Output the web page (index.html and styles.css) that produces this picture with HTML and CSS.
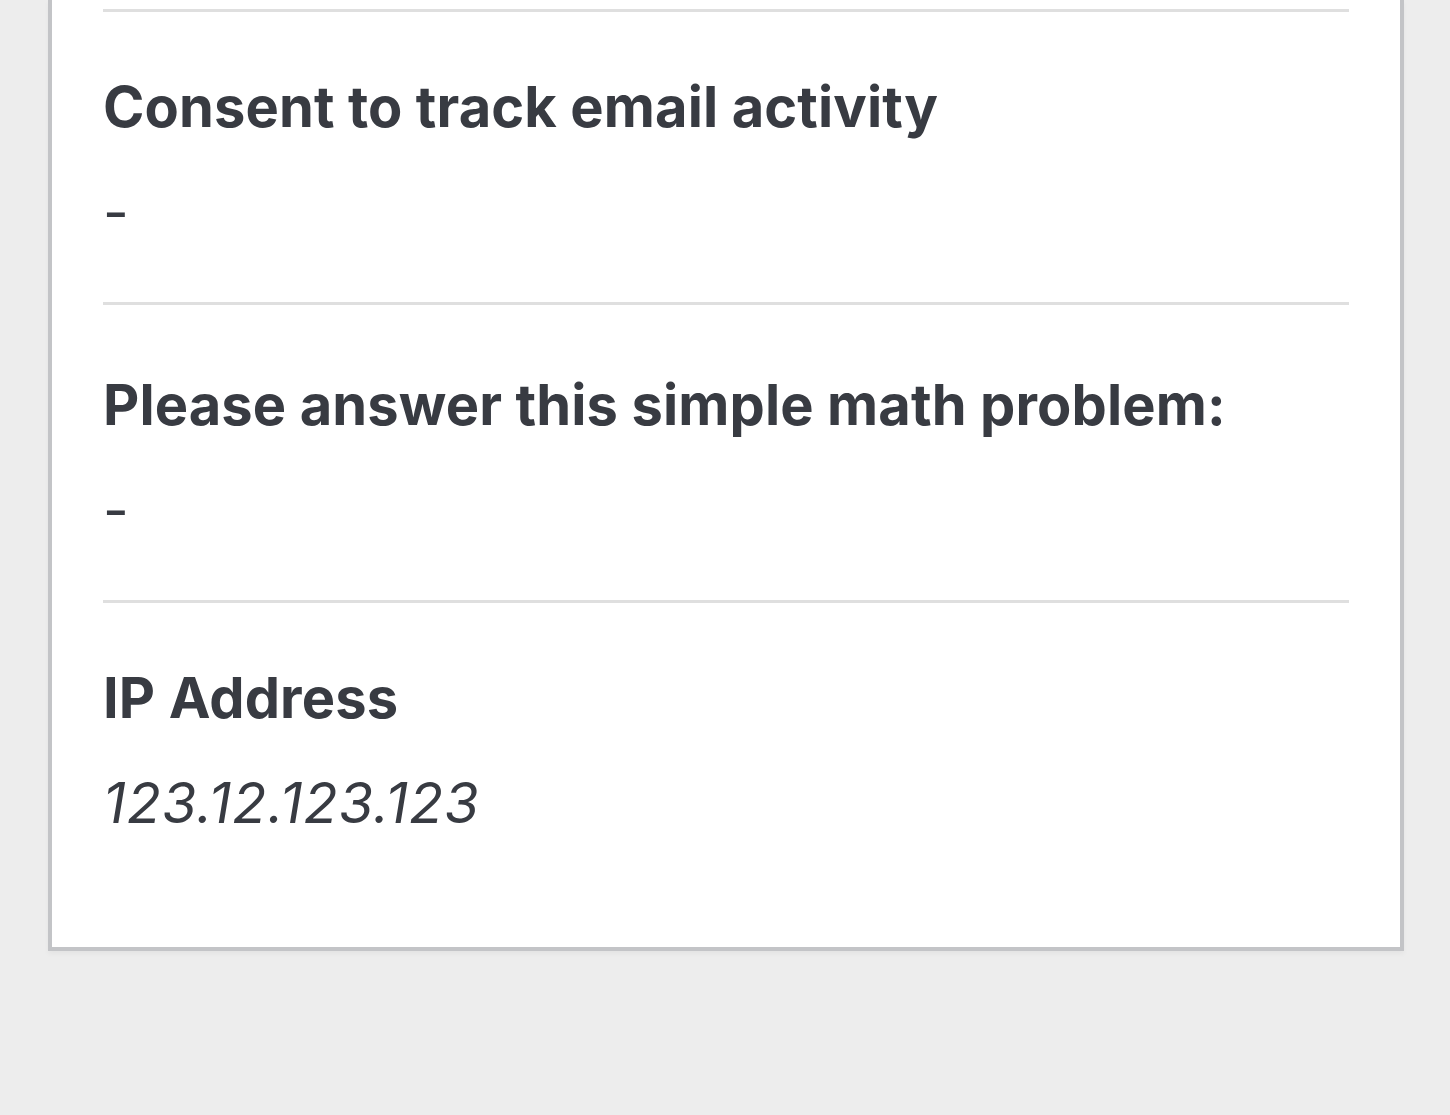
FILE: index.html
```html
<!DOCTYPE html>
<html lang="en">
<head>
<meta charset="utf-8">
<title>Entry</title>
<link rel="stylesheet" href="styles.css">
</head>
<body>
<div class="page">
  <div class="card">
    <div class="field">
      <h3 class="label">Consent to track email activity</h3>
      <p class="value">-</p>
    </div>
    <div class="field field-wide">
      <h3 class="label">Please answer this simple math problem:</h3>
      <p class="value">-</p>
    </div>
    <div class="field">
      <h3 class="label">IP Address</h3>
      <p class="value value-em">123.12.123.123</p>
    </div>
  </div>
</div>
</body>
</html>
```
FILE: styles.css
```css
html, body {
  margin: 0;
  padding: 0;
  background: #ededed;
}
body {
  font-family: Inter, "Noto Sans", "Liberation Sans", sans-serif;
  color: #383b42;
}
.page {
  padding: 0 46px 0 48px;
  height: 1115px;
  box-sizing: border-box;
}
.card {
  background: #ffffff;
  border: 4px solid #c3c4c7;
  border-top: none;
  padding: 9px 51px 110px 51px;
  box-shadow: 0 3px 5px rgba(0, 0, 0, 0.04);
}
.field {
  border-top: 3px solid #dfdfdf;
  padding: 61px 0 56px 0;
}
.field-wide {
  padding-top: 66px;
}
.field:last-child {
  padding-bottom: 0;
}
.label {
  margin: 0;
  font-size: 56px;
  line-height: 68px;
  font-weight: 700;
  letter-spacing: 0.12px;
}
.value {
  margin: 37px 0 0 0;
  font-size: 56px;
  line-height: 68px;
  font-weight: 400;
}
.value-em {
  font-style: italic;
  letter-spacing: 1px;
}
```
